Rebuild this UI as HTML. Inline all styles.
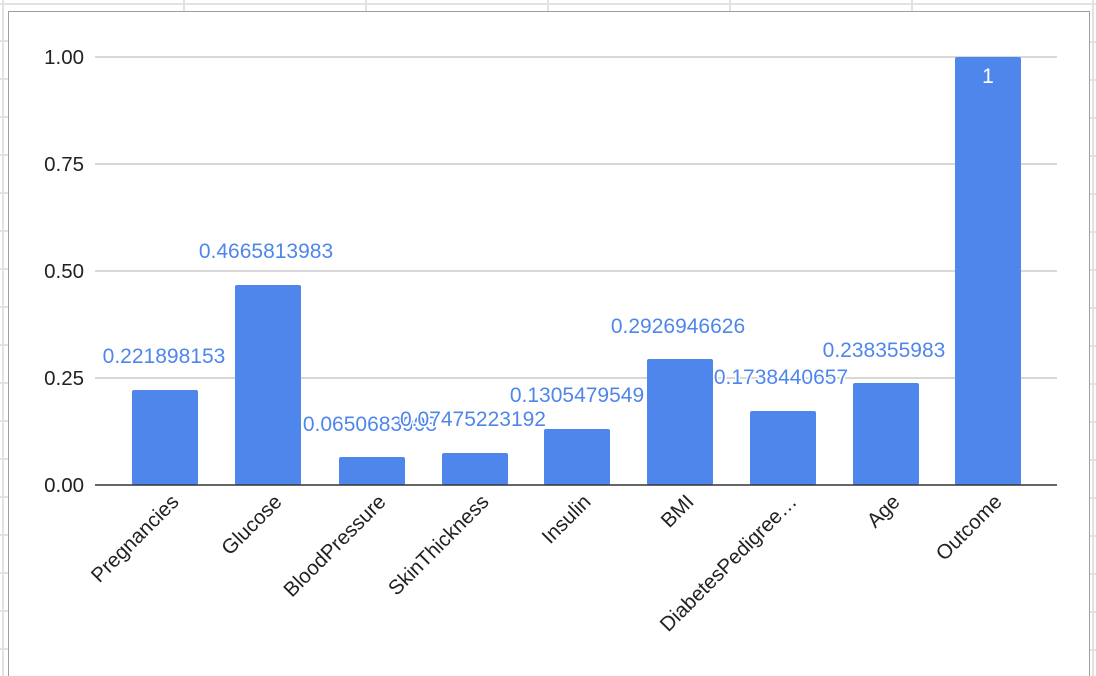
<!DOCTYPE html>
<html><head><meta charset="utf-8"><style>
html,body{margin:0;padding:0;background:#fff;width:1096px;height:676px;overflow:hidden}
svg{display:block;font-family:"Liberation Sans",Arial,sans-serif}
.v{fill:#4f86ec;font-size:21px;text-anchor:middle;stroke:#fff;stroke-width:3px;paint-order:stroke;stroke-linejoin:round}
.y{font-size:20.5px;fill:#222;text-anchor:end}
.x{font-size:20.5px;fill:#222;text-anchor:end}
</style></head><body>
<svg width="1096" height="676" viewBox="0 0 1096 676">
<g stroke="#e2e2e2" stroke-width="2">
<line x1="0" y1="4" x2="1096" y2="4"/>
<line x1="3" y1="0" x2="3" y2="676"/>
<line x1="184" y1="0" x2="184" y2="11"/>
<line x1="366" y1="0" x2="366" y2="11"/>
<line x1="548" y1="0" x2="548" y2="11"/>
<line x1="730" y1="0" x2="730" y2="11"/>
<line x1="912" y1="0" x2="912" y2="11"/>
<line x1="1093" y1="0" x2="1093" y2="676"/>
</g>
<g stroke="#e2e2e2" stroke-width="2">
<line x1="0" y1="41" x2="8" y2="41"/><line x1="0" y1="79" x2="8" y2="79"/><line x1="0" y1="117" x2="8" y2="117"/><line x1="0" y1="155" x2="8" y2="155"/><line x1="0" y1="193" x2="8" y2="193"/><line x1="0" y1="231" x2="8" y2="231"/><line x1="0" y1="269" x2="8" y2="269"/><line x1="0" y1="307" x2="8" y2="307"/><line x1="0" y1="345" x2="8" y2="345"/><line x1="0" y1="383" x2="8" y2="383"/><line x1="0" y1="421" x2="8" y2="421"/><line x1="0" y1="459" x2="8" y2="459"/><line x1="0" y1="497" x2="8" y2="497"/><line x1="0" y1="535" x2="8" y2="535"/><line x1="0" y1="573" x2="8" y2="573"/><line x1="0" y1="611" x2="8" y2="611"/><line x1="0" y1="649" x2="8" y2="649"/>
<line x1="1090" y1="42" x2="1096" y2="42"/><line x1="1090" y1="80" x2="1096" y2="80"/><line x1="1090" y1="118" x2="1096" y2="118"/><line x1="1090" y1="156" x2="1096" y2="156"/><line x1="1090" y1="194" x2="1096" y2="194"/><line x1="1090" y1="232" x2="1096" y2="232"/><line x1="1090" y1="270" x2="1096" y2="270"/><line x1="1090" y1="308" x2="1096" y2="308"/><line x1="1090" y1="346" x2="1096" y2="346"/><line x1="1090" y1="384" x2="1096" y2="384"/><line x1="1090" y1="422" x2="1096" y2="422"/><line x1="1090" y1="460" x2="1096" y2="460"/><line x1="1090" y1="498" x2="1096" y2="498"/><line x1="1090" y1="536" x2="1096" y2="536"/><line x1="1090" y1="574" x2="1096" y2="574"/><line x1="1090" y1="612" x2="1096" y2="612"/><line x1="1090" y1="650" x2="1096" y2="650"/>
</g>
<rect x="8.5" y="11.5" width="1081" height="670" fill="#fff" stroke="#9e9e9e" stroke-width="1"/>
<g stroke="#cccccc" stroke-width="1.5">
<line x1="95" y1="57" x2="1057" y2="57"/>
<line x1="95" y1="164" x2="1057" y2="164"/>
<line x1="95" y1="271" x2="1057" y2="271"/>
<line x1="95" y1="378" x2="1057" y2="378"/>
</g>
<g class="y">
<text x="84" y="64">1.00</text>
<text x="84" y="171">0.75</text>
<text x="84" y="278">0.50</text>
<text x="84" y="385">0.25</text>
<text x="84" y="492">0.00</text>
</g>
<g fill="#4f86ec">
<rect x="132" y="390" width="66" height="95" rx="2"/>
<rect x="235" y="285" width="66" height="200" rx="2"/>
<rect x="339" y="457" width="66" height="28" rx="2"/>
<rect x="442" y="453" width="66" height="32" rx="2"/>
<rect x="544" y="429" width="66" height="56" rx="2"/>
<rect x="647" y="359" width="66" height="126" rx="2"/>
<rect x="750" y="411" width="66" height="74" rx="2"/>
<rect x="853" y="383" width="66" height="102" rx="2"/>
<rect x="955" y="57" width="66" height="428" rx="2"/>
</g>
<line x1="95" y1="485" x2="1057" y2="485" stroke="#333" stroke-width="1.5"/>
<g class="v">
<text x="164" y="363">0.221898153</text>
<text x="266" y="258">0.4665813983</text>
<text x="370" y="431">0.0650683903</text>
<text x="473" y="426">0.07475223192</text>
<text x="577" y="402">0.1305479549</text>
<text x="678" y="333">0.2926946626</text>
<text x="781" y="384">0.1738440657</text>
<text x="884" y="357">0.238355983</text>
</g>
<text x="988" y="83" font-size="21" fill="#fff" text-anchor="middle">1</text>
<g class="x">
<text transform="translate(180,503) rotate(-45)">Pregnancies</text>
<text transform="translate(283,503) rotate(-45)">Glucose</text>
<text transform="translate(387,503) rotate(-45)">BloodPressure</text>
<text transform="translate(490,503) rotate(-45)">SkinThickness</text>
<text transform="translate(592,503) rotate(-45)">Insulin</text>
<text transform="translate(695,503) rotate(-45)">BMI</text>
<text transform="translate(798,503) rotate(-45)">DiabetesPedigree…</text>
<text transform="translate(901,503) rotate(-45)">Age</text>
<text transform="translate(1003,503) rotate(-45)">Outcome</text>
</g>
</svg>
</body></html>
